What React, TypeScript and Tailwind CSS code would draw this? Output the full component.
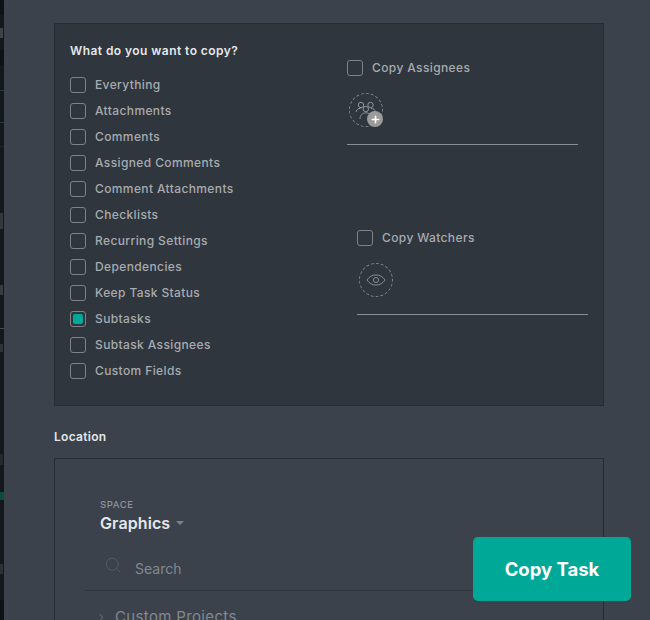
import { ChevronRightIcon, PlusIcon, SearchIcon } from "lucide-react";

const options = [
  "Everything",
  "Attachments",
  "Comments",
  "Assigned Comments",
  "Comment Attachments",
  "Checklists",
  "Recurring Settings",
  "Dependencies",
  "Keep Task Status",
  "Subtasks",
  "Subtask Assignees",
  "Custom Fields",
];

const Check = ({ label, checked }: { label: string; checked?: boolean }) => (
  <div className="flex h-4 items-center gap-[9px]">
    <div className="flex h-4 w-4 shrink-0 items-center justify-center rounded-[3px] border border-[#7d8287]">
      {checked && <div className="h-[10px] w-[10px] rounded-[2px] bg-[#00a897]" />}
    </div>
    <span className="text-[12px] leading-4 font-medium tracking-[0.38px] text-[#a7abb0]">{label}</span>
  </div>
);

const Circle = ({ children }: { children: React.ReactNode }) => (
  <div className="relative mt-[17px] ml-[2px] flex h-[34px] w-[34px] items-center justify-center rounded-full border border-dashed border-[#7d8287]">
    {children}
  </div>
);

const PeopleIcon = () => (
  <svg width="22" height="20" viewBox="0 0 22 20" fill="none" stroke="#90959a" strokeWidth="1">
    <circle cx="6" cy="5" r="2.7" />
    <circle cx="15.5" cy="5" r="2.7" />
    <path d="M1 12c.5-2.5 2.3-3.6 4.5-3.6M20.5 12c-.5-2.5-2.3-3.6-4.500-3.600" />
    <circle cx="10.8" cy="9" r="2.7" />
    <path d="M5 19c0-3.700 2.400-6.200 5.800-6.200 2 0 3.600.8 4.600 2.200" />
  </svg>
);

const EyeIcon = () => (
  <svg width="20" height="14" viewBox="0 0 22 14" fill="none" stroke="#90959a" strokeWidth="1">
    <path d="M1 7c2.600-3.800 6-5.600 10-5.600S18.400 3.200 21 7c-2.600 3.800-6 5.600-10 5.600S3.600 10.800 1 7z" />
    <circle cx="11" cy="7" r="2.800" />
  </svg>
);

const App = () => {
  return (
    <div className="flex h-[620px] w-[650px] overflow-hidden bg-[#3b424b] font-['Inter','Liberation_Sans',sans-serif]">
      {/* background page behind the modal */}
      <div className="flex w-1 shrink-0 flex-col bg-[#14181c]">
        <div className="h-[15px] bg-[#0f1215]" />
        <div className="mt-[13px] h-[10px] w-[3px] bg-[#3d4347]" />
        <div className="mt-[12px] h-[15px] bg-[#0f1215]" />
        <div className="mt-[25px] h-px bg-[#2a383f]" />
        <div className="mt-[31px] h-px bg-[#2a383f]" />
        <div className="mt-[23px] h-px bg-[#202529]" />
        <div className="mt-[66px] h-[16px] w-[3px] bg-[#33383d]" />
        <div className="mt-[56px] h-[10px] w-[3px] bg-[#373c41]" />
        <div className="mt-[33px] h-px bg-[#454a50]" />
        <div className="mt-[15px] h-[8px] w-[3px] bg-[#2e3338]" />
        <div className="mt-[102px] h-[11px] w-[3px] bg-[#25292e]" />
        <div className="mt-[27px] h-[8px] bg-[#0d4a42]" />
        <div className="mt-[64px] h-[10px] w-[3px] bg-[#2c3136]" />
        <div className="mt-[26px] flex-1 bg-[#0f1215]" />
      </div>

      <div className="relative flex-1 pt-[23px] pl-[50px]">
        <div className="flex h-[383px] w-[550px] border border-[#272c32] bg-[#30363d]">
          <div className="w-[292px] shrink-0 pt-[19px] pl-[15px]">
            <div className="text-[12px] leading-4 font-semibold tracking-[0.44px] text-[#e4e7ea]">What do you want to copy?</div>
            <div className="mt-[18px] flex flex-col gap-[10px]">
              {options.map((o) => (
                <Check key={o} label={o} checked={o === "Subtasks"} />
              ))}
            </div>
          </div>
          <div className="pt-[36px]">
            <div className="w-[231px] border-b border-[#8a8f94] pb-[17px]">
              <Check label="Copy Assignees" />
              <Circle>
                <PeopleIcon />
                <div className="absolute -right-[1px] -bottom-[1px] flex h-4 w-4 items-center justify-center rounded-full bg-[#9b9b9b] text-white">
                  <PlusIcon size={11} strokeWidth={3.5} />
                </div>
              </Circle>
            </div>
            <div className="mt-[85px] ml-[10px] w-[231px] border-b border-[#8a8f94] pb-[17px]">
              <Check label="Copy Watchers" />
              <Circle>
                <EyeIcon />
              </Circle>
            </div>
          </div>
        </div>

        <div className="mt-[23px] text-[12px] leading-4 font-semibold tracking-[0.3px] text-[#e4e7ea]">Location</div>

        <div className="mt-[13px] h-[300px] w-[550px] border border-[#272c32] pt-[40px]">
          <div className="pl-[45px]">
            <div className="text-[9.5px] leading-3 font-medium tracking-[0.6px] text-[#8d9298]">SPACE</div>
            <div className="mt-[1px] flex items-center gap-[6px]">
              <span className="text-[16px] leading-[22px] font-semibold tracking-[0.1px] text-[#e4e7ea]">Graphics</span>
              <div className="h-0 w-0 border-x-[4px] border-t-[4px] border-x-transparent border-t-[#7d8287]" />
            </div>
          </div>
          <div className="mt-[23px] ml-[30px] flex h-[34px] items-start gap-[13px] border-b border-[#30363d] pl-[19px]">
            <SearchIcon size={18} strokeWidth={1} className="mt-[-1px] text-[#5c6269]" />
            <span className="mt-[2px] text-[14px] leading-5 text-[#83888e]">Search</span>
          </div>
          <div className="mt-[16px] ml-[41px] flex items-center gap-[8px]">
            <ChevronRightIcon size={11} strokeWidth={1.25} className="text-[#9a9fa4]" />
            <span className="text-[15px] leading-5 tracking-[0.35px] text-[#83888e]">Custom Projects</span>
          </div>
        </div>

        <button className="absolute top-[537px] left-[469px] flex h-[64px] w-[158px] items-center justify-center rounded-[5px] bg-[#00a897] pt-[1px] text-[18.5px] font-bold text-white">
          Copy Task
        </button>
      </div>
    </div>
  );
};

export default App;
